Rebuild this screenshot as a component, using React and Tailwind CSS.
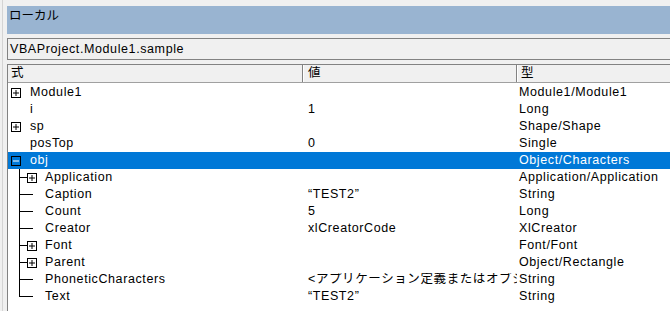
import React from "react";

const rows = [
  { name: "Module1", value: "", type: "Module1/Module1", box: "plus" },
  { name: "i", value: "1", type: "Long" },
  { name: "sp", value: "", type: "Shape/Shape", box: "plus" },
  { name: "posTop", value: "0", type: "Single" },
  { name: "obj", value: "", type: "Object/Characters", box: "minus", selected: true },
  { name: "Application", value: "", type: "Application/Application", box: "plus", child: true },
  { name: "Caption", value: "“TEST2”", type: "String", child: true },
  { name: "Count", value: "5", type: "Long", child: true },
  { name: "Creator", value: "xlCreatorCode", type: "XlCreator", child: true },
  { name: "Font", value: "", type: "Font/Font", box: "plus", child: true },
  { name: "Parent", value: "", type: "Object/Rectangle", box: "plus", child: true },
  {
    name: "PhoneticCharacters",
    value: "<アプリケーション定義またはオブジェクト定義のエラーです>",
    type: "String",
    child: true,
  },
  { name: "Text", value: "“TEST2”", type: "String", child: true, last: true },
];

const Box = ({ kind, selected }) => (
  <svg width="10" height="10" viewBox="0 0 10 10" className="shrink-0">
    <rect x="0.5" y="0.5" width="9" height="9" fill="none" stroke="#000" />
    <line x1="2" y1="5" x2="8" y2="5" stroke={selected ? "#fff" : "#000"} />
    {kind === "plus" && <line x1="5" y1="2" x2="5" y2="8" stroke="#000" />}
  </svg>
);

const Tree = ({ box, last }) => (
  <svg width="28" height="17" viewBox="0 0 28 17" className="shrink-0">
    <line x1="10.5" y1="0" x2="10.5" y2={last ? 9 : 17} stroke="#000" />
    <line x1="10" y1="8.5" x2={box ? 18 : 24} y2="8.5" stroke="#000" />
    {box && (
      <g>
        <rect x="18.5" y="4.5" width="9" height="9" fill="#fff" stroke="#000" />
        <line x1="20" y1="9" x2="26" y2="9" stroke="#000" />
        <line x1="23" y1="6" x2="23" y2="12" stroke="#000" />
      </g>
    )}
  </svg>
);

const Row = ({ r }) => {
  const sel = r.selected;
  return (
    <div
      className={
        "flex h-[17px] items-center " + (sel ? "bg-[#0078d7] text-white" : "text-black")
      }
    >
      <div className="flex w-[295px] shrink-0 items-center overflow-hidden">
        {r.child ? (
          <div className="flex items-center pl-[1px]">
            <Tree box={r.box} last={r.last} />
            <span className="pl-[8px]">{r.name}</span>
          </div>
        ) : (
          <div className="flex items-center pl-[3px]">
            <div className="w-[10px]">{r.box && <Box kind={r.box} selected={sel} />}</div>
            <span className="pl-[9px]">{r.name}</span>
          </div>
        )}
      </div>
      <div className="w-[214px] shrink-0 overflow-hidden whitespace-nowrap pl-[5px]">{r.value}</div>
      <div className="flex-1 whitespace-nowrap pl-[2px]">{r.type}</div>
    </div>
  );
};

export default function App() {
  return (
    <div
      className="relative h-[311px] w-[670px] overflow-hidden bg-[#f0f0f0] text-[12.5px] leading-none tracking-[0.6px] text-black"
      style={{ fontFamily: '"Liberation Sans", "Noto Sans CJK JP", sans-serif' }}
    >
      <div className="flex h-full">
        <div className="w-[2px] shrink-0" />
        <div className="w-px shrink-0 bg-[#d4d4d4]" />
        <div className="flex min-w-0 flex-1 flex-col pt-[6px] pl-[4px]">
          <div className="flex h-[28px] items-start bg-[#99b4d1] pl-[2px] pt-[4px] tracking-normal">
            ローカル
          </div>
          <div className="mt-[4px] flex h-[22px] items-center border-y border-l border-[#828282] pl-[2px]">
            VBAProject.Module1.sample
          </div>
          <div className="mt-[4px] flex-1 border-l border-t border-[#828282] bg-white">
            <div className="flex h-[18px] items-center border-b border-[#a0a0a0] bg-[#f0f0f0]">
              <div className="flex h-full w-[295px] shrink-0 items-center border-r border-[#828282] pl-[3px]">
                式
              </div>
              <div className="flex h-full w-[214px] shrink-0 items-center border-l border-r border-l-white border-r-[#828282] pl-[4px]">
                値
              </div>
              <div className="flex h-full flex-1 items-center border-l border-white pl-[3px]">型</div>
            </div>
            <div className="pt-px">
              {rows.map((r) => (
                <Row key={r.name} r={r} />
              ))}
            </div>
          </div>
        </div>
      </div>
    </div>
  );
}
